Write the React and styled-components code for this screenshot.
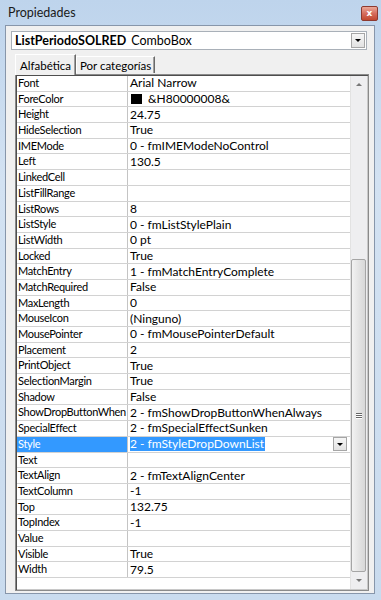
import React from 'react';
import styled, { createGlobalStyle } from 'styled-components';

const Global = createGlobalStyle`
  html, body { margin: 0; padding: 0; background: #fff; }
  body { font-family: Lato, "Noto Sans", "DejaVu Sans", sans-serif; }
`;

const Window = styled.div`
  width: 381px;
  height: 600px;
  box-sizing: border-box;
  display: flex;
  flex-direction: column;
  background: linear-gradient(180deg, #bed4ec 0%, #d3e2f2 30%, #c9dbee 100%);
  padding: 0 6px 6px 5px;
`;

const TitleBar = styled.div`
  height: 25px;
  flex: none;
  display: flex;
  align-items: center;
  justify-content: space-between;
  padding-left: 3px;
`;

const Title = styled.span`
  font-size: 12.5px;
  color: #1a1a1a;
`;

const CloseBtn = styled.div`
  width: 17px;
  height: 15px;
  margin-right: -3px;
  margin-top: 2px;
  box-sizing: border-box;
  border: 1px solid #8d3a30;
  border-radius: 2px;
  background: linear-gradient(180deg, #eba898 0%, #d66d5d 50%, #c2472f 100%);
  display: flex;
  align-items: center;
  justify-content: center;
  color: #fff;
  font-size: 9px;
  font-weight: bold;
  font-family: "DejaVu Sans", sans-serif;
  line-height: 1;
`;

const Panel = styled.div`
  flex: 1;
  background: #f0f0f0;
  border: 1px solid #8796aa;
  display: flex;
  flex-direction: column;
  min-height: 0;
`;

const Combo = styled.div`
  margin: 5px 7px 0 5px;
  height: 19px;
  box-sizing: border-box;
  border: 1px solid #a9b0b8;
  background: #fff;
  display: flex;
  align-items: center;
  padding-left: 3px;
  font-size: 12.5px;
  color: #000;
`;

const ComboName = styled.span`
  font-weight: bold;
  margin-right: 5px;
`;

const ComboType = styled.span`
  flex: 1;
`;

const DropBtn = styled.div`
  width: ${p => p.$w || 14}px;
  height: ${p => p.$h || 15}px;
  box-sizing: border-box;
  border: 1px solid #a6a6a6;
  background: linear-gradient(180deg, #f6f6f6 0%, #e2e2e2 100%);
  display: flex;
  align-items: center;
  justify-content: center;
  margin-right: ${p => p.$mr || 1}px;
  flex: none;
`;

const Tri = styled.div`
  width: 0;
  height: 0;
  border-left: 3px solid transparent;
  border-right: 3px solid transparent;
  border-top: 3px solid #000;
  ${p => p.$up && `border-top: none; border-bottom: 3px solid #777;`}
  ${p => p.$gray && `border-top-color: #777;`}
`;

const TabStrip = styled.div`
  margin: 3px 0 0 9px;
  height: 21px;
  display: flex;
  align-items: flex-end;
  position: relative;
  z-index: 1;
`;

const Tab = styled.div`
  box-sizing: border-box;
  height: ${p => (p.$active ? 21 : 17)}px;
  margin-bottom: ${p => (p.$active ? -1 : 1)}px;
  padding: 0 ${p => (p.$active ? 4 : 3)}px;
  display: flex;
  align-items: center;
  font-size: 11.5px;
  color: #000;
  background: #f0f0f0;
  border-left: 1px solid #fff;
  border-top: 1px solid #fff;
  border-right: 1px solid #6a6a6a;
  box-shadow: inset -1px 0 0 #a0a0a0;
`;

const Grid = styled.div`
  margin: 0 5px 2px 9px;
  flex: 1;
  min-height: 0;
  display: flex;
  border: 1px solid #8a8a8a;
  box-shadow: inset 1px 1px 0 #4e4e4e, inset -1px -1px 0 #c8c8c8;
  padding: 1px;
  background: #fff;
`;

const Rows = styled.div`
  flex: 1;
  display: flex;
  flex-direction: column;
  background: #fff;
`;

const Row = styled.div`
  height: 15.7px;
  box-sizing: border-box;
  display: grid;
  grid-template-columns: 111px 1fr;
  border-bottom: 1px solid #d2d2d2;
  font-size: 12px;
  line-height: 14px;
  color: #000;
`;

const NameCell = styled.div`
  border-right: 1px solid #c4c4c4;
  padding-left: 1px;
  white-space: nowrap;
  overflow: hidden;
  font-size: 11px;
  letter-spacing: -0.3px;
  background: ${p => (p.$sel ? '#3399ff' : 'transparent')};
  color: ${p => (p.$sel ? '#fff' : '#000')};
`;

const ValueCell = styled.div`
  padding-left: 2px;
  white-space: nowrap;
  overflow: hidden;
  display: flex;
  align-items: center;
`;

const ValueText = styled.span`
  flex: ${p => (p.$sel ? 'none' : 1)};
  background: ${p => (p.$sel ? '#3399ff' : 'transparent')};
  color: ${p => (p.$sel ? '#fff' : '#000')};
  padding-right: ${p => (p.$sel ? 1 : 0)}px;
`;

const Spacer = styled.span`
  flex: 1;
`;

const Swatch = styled.span`
  width: 11px;
  height: 10px;
  background: #000;
  margin: 0 6px 0 1px;
  flex: none;
`;

const Scroll = styled.div`
  width: 16px;
  flex: none;
  display: flex;
  flex-direction: column;
  background: #eeeef0;
  border-left: 1px solid #e2e2e2;
`;

const ArrowBtn = styled.div`
  height: 17px;
  flex: none;
  display: flex;
  align-items: center;
  justify-content: center;
`;

const TrackGap = styled.div`
  height: 166px;
  flex: none;
`;

const Thumb = styled.div`
  flex: 1;
  margin: 0 1px 0 0;
  border: 1px solid #a5a5a5;
  border-radius: 2px;
  background: linear-gradient(90deg, #f2f2f2 0%, #e4e4e4 50%, #d8d8d8 100%);
  display: flex;
  flex-direction: column;
  align-items: center;
  justify-content: center;
  gap: 1px;
`;

const Grip = styled.div`
  width: 6px;
  height: 1px;
  background: #666;
  box-shadow: 0 1px 0 #fff;
`;

const props = [
  ['Font', 'Arial Narrow'],
  ['ForeColor', '&H80000008&', 'swatch'],
  ['Height', '24.75'],
  ['HideSelection', 'True'],
  ['IMEMode', '0 - fmIMEModeNoControl'],
  ['Left', '130.5'],
  ['LinkedCell', ''],
  ['ListFillRange', ''],
  ['ListRows', '8'],
  ['ListStyle', '0 - fmListStylePlain'],
  ['ListWidth', '0 pt'],
  ['Locked', 'True'],
  ['MatchEntry', '1 - fmMatchEntryComplete'],
  ['MatchRequired', 'False'],
  ['MaxLength', '0'],
  ['MouseIcon', '(Ninguno)'],
  ['MousePointer', '0 - fmMousePointerDefault'],
  ['Placement', '2'],
  ['PrintObject', 'True'],
  ['SelectionMargin', 'True'],
  ['Shadow', 'False'],
  ['ShowDropButtonWhen', '2 - fmShowDropButtonWhenAlways'],
  ['SpecialEffect', '2 - fmSpecialEffectSunken'],
  ['Style', '2 - fmStyleDropDownList', 'sel'],
  ['Text', ''],
  ['TextAlign', '2 - fmTextAlignCenter'],
  ['TextColumn', '-1'],
  ['Top', '132.75'],
  ['TopIndex', '-1'],
  ['Value', ''],
  ['Visible', 'True'],
  ['Width', '79.5'],
];

export default function App() {
  return (
    <>
      <Global />
      <Window>
        <TitleBar>
          <Title>Propiedades</Title>
          <CloseBtn>x</CloseBtn>
        </TitleBar>
        <Panel>
          <Combo>
            <ComboName>ListPeriodoSOLRED</ComboName>
            <ComboType>ComboBox</ComboType>
            <DropBtn $w={14} $h={15}>
              <Tri />
            </DropBtn>
          </Combo>
          <TabStrip>
            <Tab $active>Alfabética</Tab>
            <Tab>Por categorías</Tab>
          </TabStrip>
          <Grid>
            <Rows>
              {props.map(([name, value, flag]) => {
                const sel = flag === 'sel';
                return (
                  <Row key={name}>
                    <NameCell $sel={sel}>{name}</NameCell>
                    <ValueCell>
                      {flag === 'swatch' && <Swatch />}
                      <ValueText $sel={sel}>{value}</ValueText>
                      {sel && (
                        <>
                          <Spacer />
                          <DropBtn $w={14} $h={14} $mr={3}>
                            <Tri />
                          </DropBtn>
                        </>
                      )}
                    </ValueCell>
                  </Row>
                );
              })}
            </Rows>
            <Scroll>
              <ArrowBtn>
                <Tri $up />
              </ArrowBtn>
              <TrackGap />
              <Thumb>
                <Grip />
                <Grip />
                <Grip />
              </Thumb>
              <ArrowBtn>
                <Tri $gray />
              </ArrowBtn>
            </Scroll>
          </Grid>
        </Panel>
      </Window>
    </>
  );
}
